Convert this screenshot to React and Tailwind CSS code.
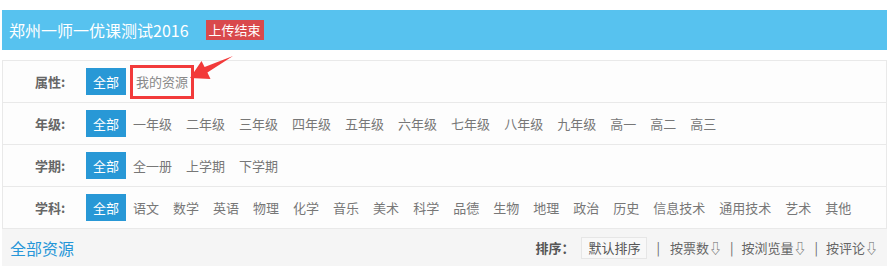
import React from 'react';

const grades = ['一年级', '二年级', '三年级', '四年级', '五年级', '六年级', '七年级', '八年级', '九年级', '高一', '高二', '高三'];
const terms = ['全一册', '上学期', '下学期'];
const subjects = ['语文', '数学', '英语', '物理', '化学', '音乐', '美术', '科学', '品德', '生物', '地理', '政治', '历史', '信息技术', '通用技术', '艺术', '其他'];

function Row({ label, children }) {
  return (
    <div className="flex items-center h-[42px] border-b border-[#e9e9e9]">
      <div className="w-[83px] pl-[32px] text-[13px] font-bold text-[#666]">{label}</div>
      <span className="h-[27px] px-[7px] flex items-center bg-[#2898d6] text-white text-[13px]">全部</span>
      {children}
    </div>
  );
}

function Item({ text }) {
  return <span className="px-[7px] text-[13px] text-[#777]">{text}</span>;
}

export default function App() {
  return (
    <div
      className="relative w-[887px] h-[266px] bg-white pl-[2px] pt-[10px] overflow-hidden"
      style={{ fontFamily: '"Noto Sans CJK SC", "Noto Sans", sans-serif' }}
    >
      {/* header */}
      <div className="h-[40px] bg-[#57c2ef] flex items-center pl-[7px]">
        <span className="text-white text-[16px]">郑州一师一优课测试2016</span>
        <span className="ml-[17px] h-[20px] px-[3px] flex items-center bg-[#d9494c] text-white text-[13px]">上传结束</span>
      </div>

      {/* filters */}
      <div className="mt-[10px] border-t border-l border-r border-[#e9e9e9] bg-[#fdfdfd]">
        <Row label="属性:">
          <span className="ml-[4px] h-[34px] px-[3px] flex items-center border-[3px] border-[#f23a3a] text-[13px] text-[#888]">我的资源</span>
        </Row>
        <Row label="年级:">
          {grades.map((g) => <Item key={g} text={g} />)}
        </Row>
        <Row label="学期:">
          {terms.map((g) => <Item key={g} text={g} />)}
        </Row>
        <Row label="学科:">
          {subjects.map((g) => <Item key={g} text={g} />)}
        </Row>
      </div>

      {/* bottom bar */}
      <div className="h-[37px] bg-[#f5f5f5] flex items-center justify-between pl-[8px] pr-[9px]">
        <span className="text-[16px] text-[#2596d8]">全部资源</span>
        <div className="flex items-center text-[13px] text-[#666]">
          <span className="font-bold text-[#555] mr-[7px]">排序：</span>
          <span className="h-[22px] px-[6px] flex items-center border border-[#e6e6e6] bg-[#f8f8f8] text-[#555]">默认排序</span>
          <span className="ml-[9px] mr-[10px]">|</span>
          <span>按票数⇩</span>
          <span className="mx-[8px]">|</span>
          <span>按浏览量⇩</span>
          <span className="mx-[8px]">|</span>
          <span>按评论⇩</span>
        </div>
      </div>

      {/* annotation arrow */}
      <svg className="absolute left-0 top-0 pointer-events-none" width="887" height="266">
        <polygon
          points="190,78 201.5,61 204.6,67.1 233,56 207.4,72.5 210.5,79"
          fill="#f23a3a"
        />
      </svg>
    </div>
  );
}
